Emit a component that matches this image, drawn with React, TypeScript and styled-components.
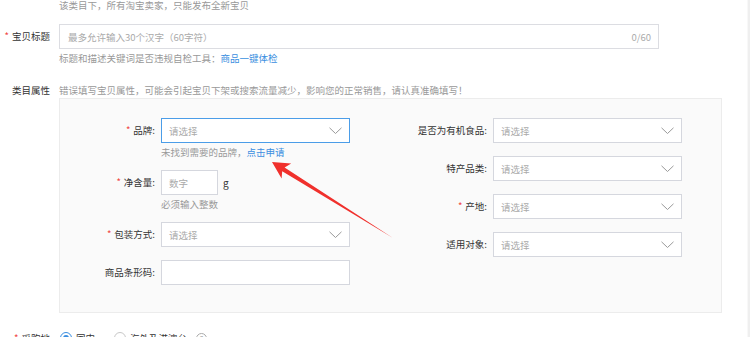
import React from "react";
import styled, { createGlobalStyle } from "styled-components";

const GlobalStyle = createGlobalStyle`
  html, body {
    margin: 0;
    padding: 0;
    background: #fff;
    overflow: hidden;
  }
  body {
    font-family: "Noto Sans CJK SC", "Noto Sans", sans-serif;
    font-size: 9.5px;
    color: #333;
  }
`;

const Page = styled.div`
  position: relative;
  display: flex;
  width: 750px;
  height: 337px;
  overflow: hidden;
`;

const Main = styled.div`
  flex: 1;
  min-width: 0;
`;

const ScrollTrack = styled.div`
  width: 2px;
  background: #efefef;
  border-left: 1px solid #f8f8f8;
`;

const Intro = styled.div`
  margin: -2px 0 0 59px;
  line-height: 14px;
  color: #999;
`;

const Row = styled.div<{ $top: number }>`
  display: grid;
  grid-template-columns: 59px auto;
  margin-top: ${(p) => p.$top}px;
`;

const RowLabel = styled.div<{ $lh: number }>`
  text-align: right;
  padding-right: 9px;
  line-height: ${(p) => p.$lh}px;
  color: #333;
  white-space: nowrap;
`;

const Star = styled.span`
  color: #f0413c;
  margin-right: 3px;
`;

const TitleInput = styled.div`
  box-sizing: border-box;
  width: 600px;
  height: 25px;
  display: flex;
  align-items: center;
  justify-content: space-between;
  padding: 0 7px 0 8px;
  border: 1px solid #dcdde2;
  background: #fff;
  color: #aaa;
`;

const Hint = styled.div`
  margin: 2px 0 -2px;
  line-height: 14px;
  color: #999;
  white-space: nowrap;
`;

const Link = styled.a`
  color: #3a8ee0;
  text-decoration: none;
`;

const Desc = styled.div`
  line-height: 14px;
  color: #999;
  white-space: nowrap;
`;

const Panel = styled.div`
  box-sizing: border-box;
  width: 663px;
  margin-top: 1px;
  padding: 19px 0 14px;
  border: 1px solid #ececec;
  background: #fafafa;
  display: grid;
  grid-template-columns: 290px 290px;
  column-gap: 42px;
  align-items: start;
`;

const Column = styled.div`
  display: flex;
  flex-direction: column;
`;

const Field = styled.div`
  display: grid;
  grid-template-columns: 95px auto;
  column-gap: 6px;
  margin-bottom: 13px;
`;

const FieldLabel = styled.div`
  text-align: right;
  line-height: 25px;
  white-space: nowrap;
  color: #333;
`;

const Select = styled.div<{ $focus?: boolean }>`
  box-sizing: border-box;
  width: 189px;
  height: 25px;
  display: flex;
  align-items: center;
  justify-content: space-between;
  padding: 0 7px 0 7px;
  border: 1px solid ${(p) => (p.$focus ? "#4b9de8" : "#d5d7de")};
  background: #fff;
  color: #aaa;
`;

const TextBox = styled.div<{ $w: number }>`
  box-sizing: border-box;
  width: ${(p) => p.$w}px;
  height: 25px;
  display: flex;
  align-items: center;
  padding-left: 7px;
  border: 1px solid #d5d7de;
  background: #fff;
  color: #aaa;
`;

const Inline = styled.div`
  display: flex;
  align-items: center;
`;

const Unit = styled.span`
  margin-left: 5px;
  color: #333;
  font-size: 10px;
`;

const Radios = styled.div`
  display: flex;
  align-items: center;
  padding-left: 1px;
  line-height: 18px;
`;

const Radio = styled.span<{ $on?: boolean }>`
  box-sizing: border-box;
  width: 12px;
  height: 12px;
  border-radius: 50%;
  border: 1px solid ${(p) => (p.$on ? "#3a8ee0" : "#c8c8c8")};
  background: #fff;
  display: flex;
  align-items: center;
  justify-content: center;
  &::after {
    content: "";
    width: 6px;
    height: 6px;
    border-radius: 50%;
    background: ${(p) => (p.$on ? "#3a8ee0" : "transparent")};
  }
`;

const RadioText = styled.span<{ $gap: number }>`
  margin: 0 ${(p) => p.$gap}px 0 4px;
  color: #333;
`;

const Help = styled.span`
  box-sizing: border-box;
  width: 11px;
  height: 11px;
  border-radius: 50%;
  border: 1px solid #aaa;
  color: #999;
  font-size: 8px;
  line-height: 9px;
  text-align: center;
`;

const ArrowLayer = styled.svg`
  position: absolute;
  left: 0;
  top: 0;
  pointer-events: none;
`;

const Chevron = () => (
  <svg width="13" height="8" viewBox="0 0 13 8">
    <polyline points="0.5,0.8 6.5,6.5 12.5,0.8" fill="none" stroke="#9a9a9a" strokeWidth="1" />
  </svg>
);

type FieldProps = {
  label: string;
  required?: boolean;
  children: React.ReactNode;
};

const FormField = ({ label, required, children }: FieldProps) => (
  <Field>
    <FieldLabel>
      {required && <Star>*</Star>}
      {label}:
    </FieldLabel>
    <div>{children}</div>
  </Field>
);

const Dropdown = ({ focus }: { focus?: boolean }) => (
  <Select $focus={focus}>
    <span>请选择</span>
    <Chevron />
  </Select>
);

export default function App() {
  return (
    <>
      <GlobalStyle />
      <Page>
        <Main>
          <Intro>该类目下，所有淘宝卖家，只能发布全新宝贝</Intro>

          <Row $top={12}>
            <RowLabel $lh={25}>
              <Star>*</Star>宝贝标题
            </RowLabel>
            <div>
              <TitleInput>
                <span>最多允许输入30个汉字（60字符）</span>
                <span>0/60</span>
              </TitleInput>
              <Hint>
                标题和描述关键词是否违规自检工具：<Link>商品一键体检</Link>
              </Hint>
            </div>
          </Row>

          <Row $top={20}>
            <RowLabel $lh={14}>类目属性</RowLabel>
            <div>
              <Desc>
                错误填写宝贝属性，可能会引起宝贝下架或搜索流量减少，影响您的正常销售，请认真准确填写！
              </Desc>
              <Panel>
                <Column>
                  <FormField label="品牌" required>
                    <Dropdown focus />
                    <Hint>
                      未找到需要的品牌，<Link>点击申请</Link>
                    </Hint>
                  </FormField>
                  <FormField label="净含量" required>
                    <Inline>
                      <TextBox $w={57}>数字</TextBox>
                      <Unit>g</Unit>
                    </Inline>
                    <Hint>必须输入整数</Hint>
                  </FormField>
                  <FormField label="包装方式" required>
                    <Dropdown />
                  </FormField>
                  <FormField label="商品条形码">
                    <TextBox $w={189} />
                  </FormField>
                </Column>
                <Column>
                  <FormField label="是否为有机食品">
                    <Dropdown />
                  </FormField>
                  <FormField label="特产品类">
                    <Dropdown />
                  </FormField>
                  <FormField label="产地" required>
                    <Dropdown />
                  </FormField>
                  <FormField label="适用对象">
                    <Dropdown />
                  </FormField>
                </Column>
              </Panel>
            </div>
          </Row>

          <Row $top={16}>
            <RowLabel $lh={18}>
              <Star>*</Star>采购地
            </RowLabel>
            <Radios>
              <Radio $on />
              <RadioText $gap={19}>国内</RadioText>
              <Radio />
              <RadioText $gap={9}>海外及港澳台</RadioText>
              <Help>?</Help>
            </Radios>
          </Row>
        </Main>
        <ScrollTrack />

        <ArrowLayer width="750" height="337" viewBox="0 0 750 337">
          <polygon
            points="272,162 291.2,163.4 284.6,167.4 393,238 282.2,171.2 281.6,178.6"
            fill="#f0302c"
          />
        </ArrowLayer>
      </Page>
    </>
  );
}
